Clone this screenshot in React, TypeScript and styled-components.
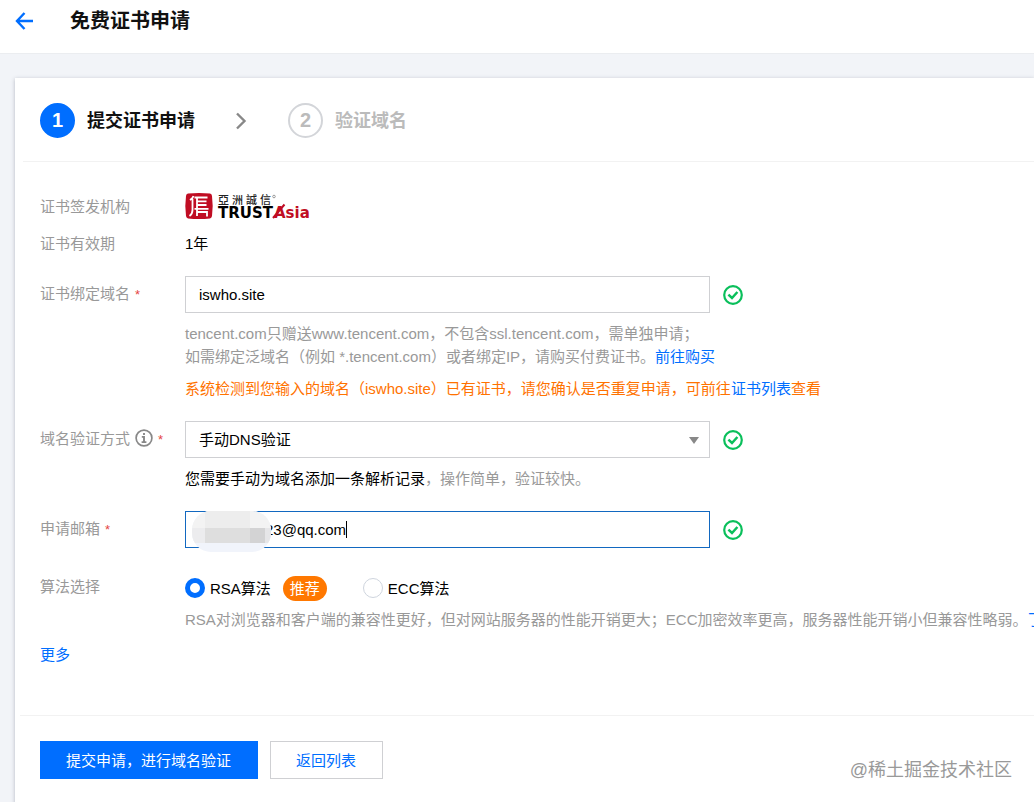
import React, { useState } from "react";
import styled, { createGlobalStyle } from "styled-components";

const blue = "#006eff";
const muted = "#999999";

const GlobalStyle = createGlobalStyle`
  * { box-sizing: border-box; }
  html, body, #root { min-height: 100vh; }
  body {
    margin: 0;
    background: #f2f4f8;
    color: #000;
    font-family: "Liberation Sans", "Noto Sans CJK SC", sans-serif;
    font-size: 15px;
    line-height: 23px;
    overflow: hidden;
  }
  input, select, button { font: inherit; color: inherit; }
  a { color: ${blue}; text-decoration: none; }
`;

const Page = styled.div`
  position: relative;
  display: flex;
  flex-direction: column;
  height: 100vh;
  overflow: hidden;
`;

const Header = styled.header`
  display: flex;
  align-items: center;
  gap: 36px;
  flex: none;
  height: 54px;
  padding: 0 15px 12px;
  background: #fff;
  border-bottom: 1px solid #ebedf0;
`;

const BackLink = styled.a`
  display: flex;
`;

const Title = styled.h1`
  margin: 0;
  font-size: 20px;
  line-height: 28px;
  font-weight: 700;
  color: #111;
`;

const Card = styled.main`
  flex: 1;
  margin: 24px 0 0 15px;
  background: #fff;
  box-shadow: 0 1px 4px rgba(54, 58, 80, 0.32);
`;

const Steps = styled.ol`
  display: flex;
  align-items: center;
  height: 84px;
  margin: 0 0 0 8px;
  padding: 2px 17px 0;
  list-style: none;
  border-bottom: 1px solid #f2f2f2;
`;

const Step = styled.li<{ $active?: boolean }>`
  display: flex;
  align-items: center;
  gap: 12px;
  font-size: 18px;
  font-weight: 700;
  color: ${(p) => (p.$active ? "#111" : "#bbbbbb")};
`;

const StepNumber = styled.span<{ $active?: boolean }>`
  display: flex;
  align-items: center;
  justify-content: center;
  width: 35px;
  height: 35px;
  border-radius: 50%;
  font-size: 20px;
  border: 2px solid ${(p) => (p.$active ? blue : "#d3d5d9")};
  background: ${(p) => (p.$active ? blue : "#fff")};
  color: ${(p) => (p.$active ? "#fff" : "#bbbbbb")};
`;

const StepName = styled.span`
  padding-top: 2px;
`;

const StepArrow = styled.li`
  display: flex;
  margin: 0 39px;
`;

const Form = styled.form`
  padding: 26px 0 0 25px;
`;

const Row = styled.div<{ $gap: number }>`
  display: flex;
  margin-bottom: ${(p) => p.$gap}px;
`;

const Label = styled.label<{ $height?: number }>`
  display: flex;
  align-items: center;
  gap: 5px;
  flex: none;
  width: 145px;
  height: ${(p) => p.$height ?? 36}px;
  color: ${muted};
`;

const Required = styled.span`
  color: #e54545;
  font-size: 13px;
  padding-top: 3px;
`;

const Content = styled.div`
  flex: none;
  white-space: nowrap;
`;

const Value = styled.div`
  display: flex;
  align-items: center;
  height: 36px;
`;

const Field = styled.div`
  position: relative;
  display: flex;
  align-items: center;
  gap: 13px;
`;

const TextInput = styled.input<{ $masked?: boolean }>`
  width: 525px;
  height: 37px;
  padding: 0 13px 0 ${(p) => (p.$masked ? 79 : 13)}px;
  border: 1px solid ${(p) => (p.$masked ? "#1268c0" : "#cfd0d3")};
  border-radius: 0;
  background: #fff;
  outline: none;
`;

const SelectWrap = styled.div`
  position: relative;
  display: flex;
`;

const Select = styled.select`
  width: 525px;
  height: 37px;
  padding: 0 13px;
  border: 1px solid #cfd0d3;
  border-radius: 0;
  background: #fff;
  appearance: none;
  outline: none;
`;

const Caret = styled.svg`
  position: absolute;
  right: 11px;
  top: 16px;
  pointer-events: none;
`;

const Redaction = styled.svg`
  position: absolute;
  left: 6px;
  top: 0;
  pointer-events: none;
`;

const TextCursor = styled.span`
  position: absolute;
  left: 161px;
  top: 10px;
  width: 1px;
  height: 17px;
  background: #000;
`;

const Hint = styled.p<{ $top: number; $warn?: boolean }>`
  margin: ${(p) => p.$top}px 0 0;
  color: ${(p) => (p.$warn ? "#ff7200" : muted)};
`;

const Strong = styled.span`
  color: #000;
`;

const Options = styled.div`
  display: flex;
  align-items: center;
  height: 36px;
`;

const Option = styled.label`
  display: flex;
  align-items: center;
  gap: 5px;
`;

const Radio = styled.input`
  appearance: none;
  width: 20px;
  height: 20px;
  margin: 0;
  border: 1px solid #cfd5de;
  border-radius: 50%;
  background: #fff;
  &:checked { border: 5px solid ${blue}; }
`;

const Badge = styled.span`
  margin: 0 36px 0 12px;
  padding: 0 7px;
  border-radius: 13px;
  background: #ff7800;
  color: #fff;
  line-height: 25px;
`;

const Footer = styled.footer`
  display: flex;
  gap: 12px;
  margin-left: 5px;
  padding: 25px 20px;
  border-top: 1px solid #f2f2f2;
`;

const Button = styled.button<{ $primary?: boolean }>`
  height: 38px;
  padding: 0 26px 0 25px;
  border: 1px solid ${(p) => (p.$primary ? blue : "#cfd0d3")};
  background: ${(p) => (p.$primary ? blue : "#fff")};
  color: ${(p) => (p.$primary ? "#fff" : blue)};
`;

const Watermark = styled.div`
  position: absolute;
  right: 22px;
  bottom: 20px;
  font-size: 18px;
  color: #999;
`;

const OkIcon = () => (
  <svg width="20" height="20" viewBox="0 0 20 20" fill="none" stroke="#0abf5b" strokeWidth="2.2" role="img" aria-label="通过">
    <circle cx="10" cy="10" r="8.8" />
    <path d="M5.400 9.600l3.600 3.400 5.400-6" strokeWidth="2.500" />
  </svg>
);

const InfoIcon = () => (
  <svg width="18" height="18" viewBox="0 0 18 18" fill="none" stroke="#888" aria-hidden="true">
    <circle cx="9" cy="9" r="7.9" strokeWidth="1.7" />
    <path d="M9 3.9v2M6.8 7.9H9v5M6.6 13.1h4.8" strokeWidth="1.9" />
  </svg>
);

const Logo = () => (
  <svg width="126" height="32" viewBox="0 -2 126 32" overflow="visible" role="img" aria-label="TrustAsia">
    <path d="M3 1.6Q14 .2 25 1.6Q26.800 2 27 4Q28.400 14 27 24Q26.800 26 25 26.400Q14 27.800 3 26.400Q1.200 26 1 24Q-.4 14 1 4Q1.200 2 3 1.600Z" fill="#c00d23" />
    <g fill="none" stroke="#fff" strokeWidth="1.8">
      <path d="M8.500 4Q8 6 5 8M7.500 7V18Q7.500 22 4.500 24" />
      <path d="M9.500 5.500H22.500M12 5.500V16.500M12 9.300H21.500M12 13H21.500M9.500 16.800H23.500M12 16.800V24M12 20H22V24.500" />
    </g>
    <g fill="#222" fontSize="11" fontWeight="500" fontFamily="Noto Sans CJK TC, sans-serif">
      <text x="33" y="12">亞</text>
      <text x="47" y="12">洲</text>
      <text x="61" y="12">誠</text>
      <text x="75" y="12">信</text>
    </g>
    <circle cx="89" cy="4.500" r="1.300" fill="none" stroke="#777" strokeWidth=".7" />
    <text x="33" y="26" fontSize="15" fontWeight="700" fill="#000" fontFamily="DejaVu Sans, sans-serif">TRUST</text>
    <text x="89" y="26" fontSize="15" fontWeight="700" fill="#c00d23" fontFamily="DejaVu Sans, sans-serif">Asia</text>
    <path d="M88 26L99.500 12.500" stroke="#c00d23" strokeWidth="2" />
  </svg>
);

export default function App() {
  const [algo, setAlgo] = useState("rsa");
  return (
    <Page>
      <GlobalStyle />
      <Header>
        <BackLink href="#back" aria-label="返回">
          <svg width="19" height="18" viewBox="0 0 19 18" fill="none" stroke={blue} strokeWidth="2.4">
            <path d="M9.500 1L2 9l7.500 8M2 9h16" />
          </svg>
        </BackLink>
        <Title>免费证书申请</Title>
      </Header>
      <Card>
        <Steps>
          <Step $active>
            <StepNumber $active>1</StepNumber><StepName>提交证书申请</StepName>
          </Step>
          <StepArrow aria-hidden="true">
            <svg width="15" height="18" viewBox="0 0 15 18" fill="none" stroke="#888" strokeWidth="2.4">
              <path d="M3 1.500l7.500 7.500L3 16.500" />
            </svg>
          </StepArrow>
          <Step>
            <StepNumber>2</StepNumber><StepName>验证域名</StepName>
          </Step>
        </Steps>
        <Form id="apply" onSubmit={(e) => e.preventDefault()}>
          <Row $gap={1}>
            <Label as="div">证书签发机构</Label>
            <Content><Value><Logo /></Value></Content>
          </Row>
          <Row $gap={15}>
            <Label as="div">证书有效期</Label>
            <Content><Value>1年</Value></Content>
          </Row>
          <Row $gap={21}>
            <Label htmlFor="domain" $height={34}>证书绑定域名<Required>*</Required></Label>
            <Content>
              <Field>
                <TextInput id="domain" defaultValue="iswho.site" />
                <OkIcon />
              </Field>
              <Hint $top={9}>
                tencent.com只赠送www.tencent.com，不包含ssl.tencent.com，需单独申请；<br />
                如需绑定泛域名（例如 *.tencent.com）或者绑定IP，请购买付费证书。<a href="#buy">前往购买</a>
              </Hint>
              <Hint $top={9} $warn>
                系统检测到您输入的域名（iswho.site）已有证书，请您确认是否重复申请，可前往<a href="#list">证书列表</a>查看
              </Hint>
            </Content>
          </Row>
          <Row $gap={21}>
            <Label htmlFor="method" $height={34}>域名验证方式<InfoIcon /><Required>*</Required></Label>
            <Content>
              <Field>
                <SelectWrap>
                  <Select id="method"><option>手动DNS验证</option></Select>
                  <Caret width="10" height="7" viewBox="0 0 10 7" aria-hidden="true"><path d="M0 0h10L5 7z" fill="#888" /></Caret>
                </SelectWrap>
                <OkIcon />
              </Field>
              <Hint $top={9}><Strong>您需要手动为域名添加一条解析记录</Strong>，操作简单，验证较快。</Hint>
            </Content>
          </Row>
          <Row $gap={22}>
            <Label htmlFor="mail" $height={34}>申请邮箱<Required>*</Required></Label>
            <Content>
              <Field>
                <TextInput id="mail" $masked defaultValue="23@qq.com" />
                <Redaction width="82" height="42" viewBox="0 0 82 42" aria-hidden="true">
                  <defs>
                    <clipPath id="blob"><rect x="1" y="0" width="79" height="41" rx="19" /></clipPath>
                  </defs>
                  <g clipPath="url(#blob)">
                    <rect width="82" height="42" fill="#f1f4fb" />
                    <rect width="82" height="17" fill="#f3f3f3" />
                    <rect x="14" y="0" width="45" height="17" fill="#ededed" />
                    <rect x="0" y="17" width="14" height="15" fill="#ececee" />
                    <rect x="14" y="17" width="45" height="15" fill="#dedede" />
                    <rect x="59" y="17" width="15" height="15" fill="#d3d3d4" />
                    <rect x="74" y="17" width="8" height="15" fill="#e6e6e8" />
                  </g>
                </Redaction>
                <TextCursor />
                <OkIcon />
              </Field>
            </Content>
          </Row>
          <Row $gap={12}>
            <Label as="div" $height={32}>算法选择</Label>
            <Content>
              <Options role="radiogroup" aria-label="算法选择">
                <Option><Radio type="radio" name="algo" checked={algo === "rsa"} onChange={() => setAlgo("rsa")} />RSA算法</Option>
                <Badge>推荐</Badge>
                <Option><Radio type="radio" name="algo" checked={algo === "ecc"} onChange={() => setAlgo("ecc")} />ECC算法</Option>
              </Options>
              <Hint $top={2}>
                RSA对浏览器和客户端的兼容性更好，但对网站服务器的性能开销更大；ECC加密效率更高，服务器性能开销小但兼容性略弱。<a href="#more">了</a>
              </Hint>
            </Content>
          </Row>
          <Row $gap={49}><a href="#expand">更多</a></Row>
        </Form>
        <Footer>
          <Button type="submit" form="apply" $primary>提交申请，进行域名验证</Button>
          <Button type="button">返回列表</Button>
        </Footer>
      </Card>
      <Watermark>@稀土掘金技术社区</Watermark>
    </Page>
  );
}
